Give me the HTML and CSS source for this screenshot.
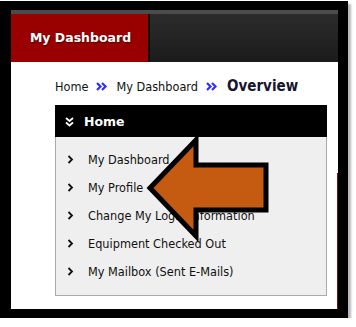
FILE: index.html
```html
<!DOCTYPE html>
<html>
<head>
<meta charset="utf-8">
<link rel="stylesheet" href="styles.css">
</head>
<body>
<div class="frame">
  <div class="header">
    <div class="tab">My Dashboard</div>
    <div class="sep"></div>
    <div class="bar"></div>
  </div>
  <div class="content">
    <div class="crumbs">
      <span class="crumb">Home</span>
      <svg class="raquo" width="12" height="9" viewBox="0 0 12 9"><path d="M1 1 L4.5 4.5 L1 8 M6 1 L9.5 4.5 L6 8" fill="none" stroke="#2f2fff" stroke-width="2.2"/></svg>
      <span class="crumb">My Dashboard</span>
      <svg class="raquo" width="12" height="9" viewBox="0 0 12 9"><path d="M1 1 L4.5 4.5 L1 8 M6 1 L9.5 4.5 L6 8" fill="none" stroke="#2f2fff" stroke-width="2.2"/></svg>
      <span class="current">Overview</span>
    </div>
    <div class="panel">
      <div class="panel-head">
        <svg class="dchev" width="9" height="10" viewBox="0 0 9 10"><path d="M1 1 L4.5 4 L8 1 M1 5.5 L4.5 8.5 L8 5.5" fill="none" stroke="#fff" stroke-width="1.8"/></svg>
        <span>Home</span>
      </div>
      <ul class="menu">
        <li><svg class="chev" width="7" height="9" viewBox="0 0 7 9"><path d="M1.5 1 L5 4.5 L1.5 8" fill="none" stroke="#111" stroke-width="1.8"/></svg>My Dashboard</li>
        <li><svg class="chev" width="7" height="9" viewBox="0 0 7 9"><path d="M1.5 1 L5 4.5 L1.5 8" fill="none" stroke="#111" stroke-width="1.8"/></svg>My Profile</li>
        <li><svg class="chev" width="7" height="9" viewBox="0 0 7 9"><path d="M1.5 1 L5 4.5 L1.5 8" fill="none" stroke="#111" stroke-width="1.8"/></svg>Change My Login Information</li>
        <li><svg class="chev" width="7" height="9" viewBox="0 0 7 9"><path d="M1.5 1 L5 4.5 L1.5 8" fill="none" stroke="#111" stroke-width="1.8"/></svg>Equipment Checked Out</li>
        <li><svg class="chev" width="7" height="9" viewBox="0 0 7 9"><path d="M1.5 1 L5 4.5 L1.5 8" fill="none" stroke="#111" stroke-width="1.8"/></svg>My Mailbox (Sent E-Mails)</li>
      </ul>
    </div>
  </div>
  <svg class="arrow" width="356" height="327" viewBox="0 0 356 327">
    <polygon points="150,188 196,140 196,165 266,165 266,210 196,210 196,236" fill="#c55a11" stroke="#000" stroke-width="5" stroke-linejoin="miter"/>
  </svg>
</div>
</body>
</html>
```
FILE: styles.css
```css
html, body {
  margin: 0;
  padding: 0;
  background: #fff;
}
body {
  padding-top: 1px;
  font-family: "DejaVu Sans", Verdana, sans-serif;
}
.frame {
  width: 327px;
  height: 299px;
  border-style: solid;
  border-color: #000;
  border-width: 9px 10px 9px 11px;
  box-shadow: 3px 3px 2px rgba(0,0,0,0.28);
  display: flex;
  flex-direction: column;
}
.header {
  height: 48px;
  border-top: 4px solid #4c4c4c;
  display: flex;
  background: linear-gradient(#2c2c2c, #1b1b1b);
}
.tab {
  width: 137px;
  background: #990000;
  color: #fff;
  font-weight: bold;
  font-size: 12.5px;
  display: flex;
  align-items: center;
  justify-content: center;
  padding-left: 2px;
  box-sizing: border-box;
  text-shadow: 1px 1px 1px rgba(0,0,0,0.45);
  padding-bottom: 2px;
}
.sep {
  width: 2px;
  background: #0e0e0e;
}
.bar {
  flex: 1;
}
.content {
  flex: 1;
  background: #fff;
  background-image: linear-gradient(to bottom, #fff 0, #fff 111px, #7a1010 111px);
  background-size: 1px 100%;
  background-repeat: no-repeat;
  background-position: right top;
  padding: 15px 11px 0 44px;
  display: flex;
  flex-direction: column;
}
.crumbs {
  height: 18px;
  display: flex;
  align-items: center;
  font-family: "DejaVu Sans Condensed", "DejaVu Sans", sans-serif;
  font-stretch: condensed;
  font-size: 12.6px;
  color: #111;
}
.raquo {
  margin: 0 8px 0 8px;
}
.current {
  font-weight: bold;
  font-size: 15px;
  color: #15152e;
  margin-left: 1px;
}
.panel {
  margin-top: 10px;
  border: 1px solid #aaa;
  border-top: none;
  background: #efefef;
}
.panel-head {
  height: 32px;
  margin: 0 -1px;
  background: #000;
  color: #fff;
  font-weight: bold;
  font-size: 12.5px;
  display: flex;
  align-items: center;
  padding-left: 10px;
  padding-top: 1px;
  box-sizing: border-box;
}
.dchev {
  margin-right: 10px;
}
.menu {
  list-style: none;
  margin: 0;
  padding: 8px 0 10px 0;
  font-family: "DejaVu Sans Condensed", "DejaVu Sans", sans-serif;
  font-stretch: condensed;
  font-size: 12.6px;
  color: #111;
}
.menu li {
  height: 28px;
  display: flex;
  align-items: center;
  padding-left: 11px;
}
.chev {
  margin-right: 14px;
}
.arrow {
  position: absolute;
  left: 0;
  top: 0;
  pointer-events: none;
}
```
